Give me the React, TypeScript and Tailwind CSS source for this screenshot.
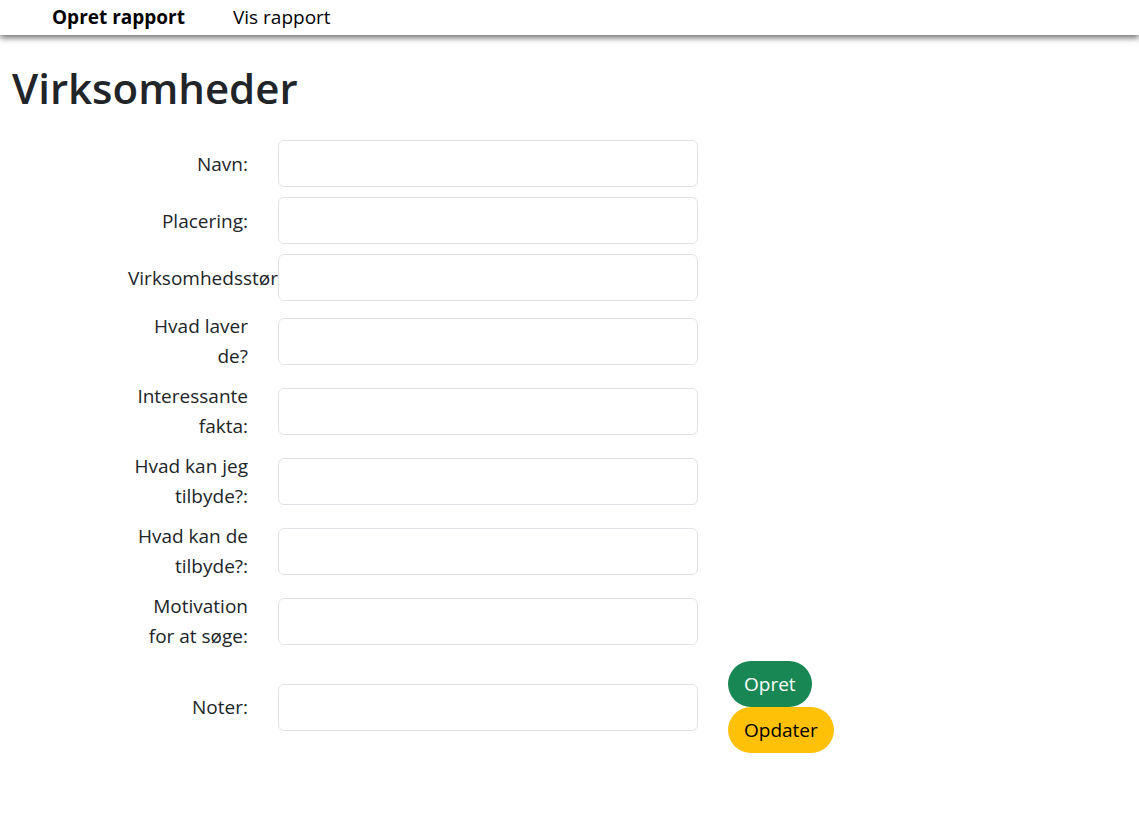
const fields = [
  "Navn:",
  "Placering:",
  "Virksomhedsstørrelse:",
  "Hvad laver de?",
  "Interessante fakta:",
  "Hvad kan jeg tilbyde?:",
  "Hvad kan de tilbyde?:",
  "Motivation for at søge:",
];

function Row({ label, children }: { label: string; children?: React.ReactNode }) {
  return (
    <div className="flex items-center gap-[30px]">
      <label className="w-[120px] shrink-0 text-right leading-[30px]">{label}</label>
      <input
        type="text"
        className="h-[47px] w-[420px] shrink-0 rounded-md border border-[#dee2e6] bg-white px-3 outline-none"
      />
      {children}
    </div>
  );
}

export default function App() {
  return (
    <div className="min-h-screen bg-white text-[19px] text-[#212529] [font-family:'Open_Sans',sans-serif]">
      {/* Navigation */}
      <nav className="flex h-[35px] items-center gap-[48px] bg-white pl-[52px] shadow-[0_3px_6px_rgba(0,0,0,0.55)]">
        <a href="#" className="font-bold text-black">Opret rapport</a>
        <a href="#" className="text-black">Vis rapport</a>
      </nav>

      <div className="px-3">
        <h1 className="mt-[28px] mb-[27px] text-[42px] font-semibold leading-[50px]">Virksomheder</h1>

        <form className="ml-[116px] flex flex-col gap-[10px]">
          {fields.map((f) => (
            <Row key={f} label={f} />
          ))}
          <Row label="Noter:">
            <div className="flex flex-col items-start">
              <button type="button" className="h-[46px] rounded-full bg-[#198754] px-4 text-white">
                Opret
              </button>
              <button type="button" className="h-[46px] rounded-full bg-[#ffc107] px-4 text-black">
                Opdater
              </button>
            </div>
          </Row>
        </form>
      </div>
    </div>
  );
}
